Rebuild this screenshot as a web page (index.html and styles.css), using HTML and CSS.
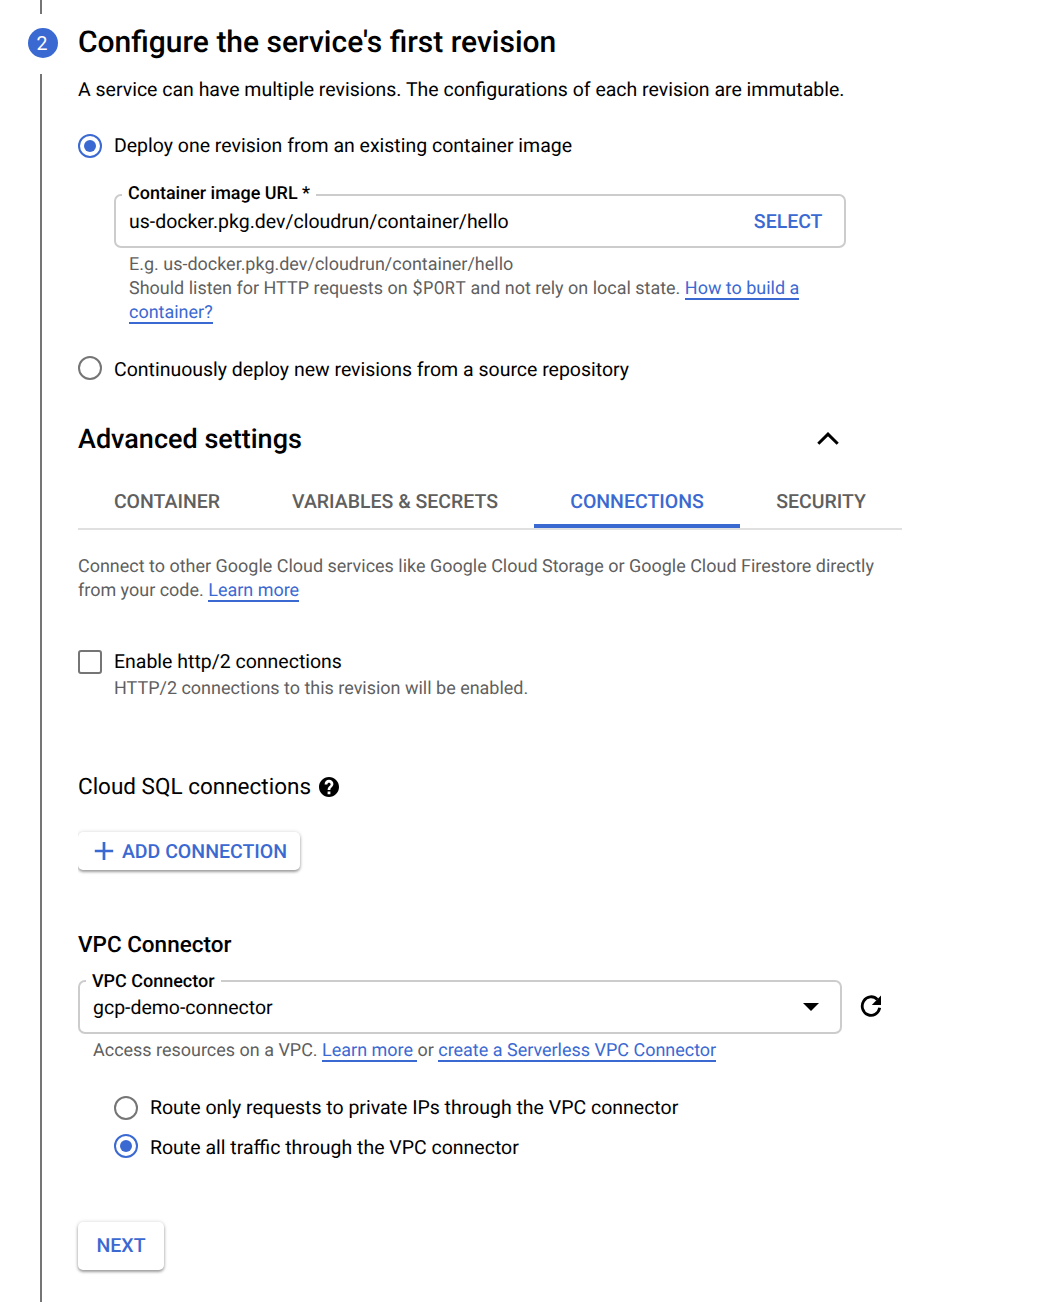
FILE: index.html
```html
<!DOCTYPE html>
<html lang="en">
<head>
<meta charset="utf-8">
<title>Create service</title>
<link rel="stylesheet" href="styles.css">
</head>
<body>
<div class="step">
  <div class="rail">
    <span class="line line-top"></span>
    <span class="badge">2</span>
    <span class="line line-rest"></span>
  </div>
  <main class="content">
    <h1 class="title"><span>Configure the service's first revision</span></h1>
    <p class="intro"><span>A service can have multiple revisions. The configurations of each revision are immutable.</span></p>

    <label class="option first"><span class="radio checked"></span><span>Deploy one revision from an existing container image</span></label>
    <div class="indent">
      <div class="field">
        <span class="field-label">Container image URL *</span>
        <span class="value">us-docker.pkg.dev/cloudrun/container/hello</span>
        <span class="select">SELECT</span>
      </div>
      <div class="help"><span>E.g. us-docker.pkg.dev/cloudrun/container/hello</span><br><span>Should listen for HTTP requests on <code>$PORT</code> and not rely on local state. </span><a>How to build a</a><br><a>container?</a></div>
    </div>
    <label class="option second"><span class="radio"></span><span class="low">Continuously deploy new revisions from a source repository</span></label>

    <div class="advanced">
      <h2 class="subtitle">Advanced settings</h2>
      <svg class="chevron" width="22" height="14" viewBox="0 0 22 14"><path d="M1.300 11.800 11 2.100l9.700 9.700" fill="none" stroke="#000" stroke-width="3"/></svg>
    </div>
    <nav class="tabs">
      <span class="tab tab-container">CONTAINER</span>
      <span class="tab tab-variables">VARIABLES &amp; SECRETS</span>
      <span class="tab tab-connections active">CONNECTIONS</span>
      <span class="tab tab-security">SECURITY</span>
    </nav>
    <p class="hint about"><span>Connect to other Google Cloud services like Google Cloud Storage or Google Cloud Firestore directly</span><br>from your code. <a>Learn more</a></p>

    <label class="option http"><span class="checkbox"></span><span class="high">Enable http/2 connections</span></label>
    <p class="hint http-hint"><span>HTTP/2 connections to this revision will be enabled.</span></p>

    <h3 class="section sql"><span>Cloud SQL connections</span>
      <svg width="20" height="20" viewBox="2 2 20 20"><path d="M12 2C6.480 2 2 6.480 2 12s4.480 10 10 10 10-4.480 10-10S17.520 2 12 2zm1.400 17.200h-2.800v-2.600h2.800v2.600zm2-7.700-.9.920c-.72.730-1.150 1.230-1.150 2.680h-2.700v-.5c0-1.100.45-2.100 1.170-2.830l1.240-1.260c.37-.36.59-.86.59-1.310 0-.9-.8-1.500-1.650-1.500s-1.650.7-1.650 1.700H7.600C7.600 6.500 9.500 4.800 12 4.800s4.400 1.800 4.400 4.200c0 .9-.36 1.800-1 2.500z"/></svg>
    </h3>
    <button class="button add"><svg width="20" height="20" viewBox="0 0 20 20"><path d="M10 1v18M.800 10h18.400" stroke="#3b69d2" stroke-width="2.700"/></svg><span>ADD CONNECTION</span></button>

    <h3 class="section vpc"><span>VPC Connector</span></h3>
    <div class="connector">
      <div class="field wide">
        <span class="field-label">VPC Connector</span>
        <span class="value">gcp-demo-connector</span>
        <svg class="caret" width="16" height="8" viewBox="0 0 16 8"><path d="M0 0h16L8 8z"/></svg>
      </div>
      <svg class="refresh" width="22" height="22" viewBox="0 0 22 22"><path d="M17.300 4.500A8.800 9.300 0 1 0 19.700 12.700" fill="none" stroke="#000" stroke-width="2.800"/><path d="M21 .5V10h-9.200z"/></svg>
    </div>
    <div class="help vpc-help"><span>Access resources on a VPC. </span><a class="more">Learn more </a>or <a>create a Serverless VPC Connector</a></div>
    <div class="indent routes">
      <label class="option"><span class="radio"></span><span>Route only requests to private IPs through the VPC connector</span></label>
      <label class="option"><span class="radio checked"></span><span class="low">Route all traffic through the VPC connector</span></label>
    </div>
    <button class="button next">NEXT</button>
  </main>
</div>
</body>
</html>
```
FILE: styles.css
```css
* { box-sizing: border-box; }
body {
  margin: 0;
  background: #fff;
  color: #000;
  font: 400 19.490px/24px Roboto, sans-serif;
  text-rendering: geometricPrecision;
}
h1, h2, h3, p { margin: 0; font-weight: 500; }
p { font-weight: 400; }
svg { display: block; flex: none; }
.step { display: flex; height: 1302px; overflow: hidden; }
.rail { width: 78px; padding-left: 28px; display: flex; flex-direction: column; }
.line { width: 2px; margin-left: 12px; background: #757575; }
.line-top { height: 14px; }
.line-rest { flex: 1; }
.badge {
  width: 30px; height: 30px; margin: 14px 0 16px;
  border-radius: 50%; background: #3b69d2; color: #fff;
  font-size: 19.500px; line-height: 31px; text-align: center; padding-right: 2px;
}
.content { width: 824px; padding-top: 23px; white-space: nowrap; }
.title { font-size: 30px; line-height: 40px; }
.intro { margin-top: 15px; }
.option { display: flex; align-items: center; gap: 12px; height: 24px; }
.first { margin-top: 32px; }
.second { margin-top: 31px; }
.low { padding-top: 3px; }
.high { padding-bottom: 1px; }
.radio {
  width: 24px; height: 24px; flex: none;
  border: 2px solid #757575; border-radius: 50%;
  display: grid; place-items: center;
}
.checked { border-color: #3b69d2; }
.checked::after { content: ""; width: 12px; height: 12px; border-radius: 50%; background: #3b69d2; }
.indent { padding-left: 36px; }
.field {
  position: relative; width: 732px; height: 54px; margin-top: 36px;
  padding: 1px 21.500px 0 13px; border: 2px solid #ccc; border-radius: 7px;
  display: flex; align-items: center; justify-content: space-between;
}
.field-label {
  position: absolute; left: 6px; top: -14px; padding: 0 6px;
  background: #fff; font-size: 17.980px; font-weight: 500;
}
.select { color: #3b69d2; font-weight: 500; }
.help, .hint { color: #5f5f5f; font-size: 17.985px; }
.help { margin-top: 5px; padding-left: 15px; }
code { font-family: "Roboto Mono", "Liberation Mono", monospace; font-size: 17.980px; line-height: 1; }
a { color: #3b69d2; display: inline-block; height: 23px; border-bottom: 2px solid #3b69d2; line-height: 24px; vertical-align: top; }
.more { white-space: pre; }
.advanced { display: flex; justify-content: space-between; align-items: center; height: 32px; margin-top: 43px; padding-right: 63px; }
.subtitle { font-size: 27px; line-height: 32px; }
.tabs { display: flex; margin-top: 23px; height: 52px; border-bottom: 2px solid #e0e0e0; color: #5f5f5f; font-weight: 500; }
.tab { height: 50px; text-align: center; line-height: 47px; }
.tab-container { width: 178px; }
.tab-variables { width: 278px; }
.tab-connections { width: 206px; }
.tab-security { width: 162px; }
.active { color: #3b69d2; border-bottom: 4px solid #3b69d2; }
.about { margin-top: 25px; }
.http { margin-top: 47px; }
.checkbox { width: 24px; height: 24px; border: 2px solid #757575; border-radius: 3px; }
.http-hint { margin-top: 3px; padding-left: 36px; }
.section { font-size: 22.500px; line-height: 32px; }
.sql { display: flex; align-items: center; gap: 8px; height: 32px; margin-top: 70px; font-weight: 400; }
.button {
  display: flex; align-items: center; justify-content: center;
  border: 0; border-radius: 5px; background: #fff; color: #3b69d2;
  font: 500 19.500px/24px Roboto, sans-serif;
  text-rendering: inherit;
  box-shadow: 0 2px 3px rgba(0,0,0,.35), 0 0 4px rgba(0,0,0,.14);
}
.add { width: 222px; height: 38px; margin-top: 29px; gap: 8px; padding: 0 13px 0 16px; clip-path: inset(-8px -8px -8px 0); }
.add span { padding-top: 2px; }
.vpc { margin-top: 59px; }
.connector { display: flex; align-items: center; gap: 18px; margin-top: 19px; }
.wide { width: 764px; margin-top: 0; padding-right: 21px; }
.wide .field-label { top: -12px; }
.caret { margin-bottom: 2px; }
.refresh { margin-bottom: 2px; }
.routes { margin-top: 33px; display: flex; flex-direction: column; gap: 14px; }
.next { width: 86px; height: 48px; margin-top: 64px; }
```
